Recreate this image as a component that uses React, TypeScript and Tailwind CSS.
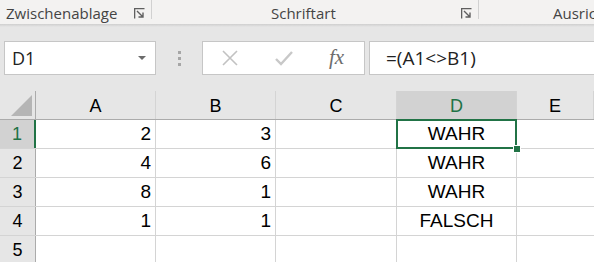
import React from 'react';

const font = { fontFamily: '"Segoe UI", "Open Sans", "Liberation Sans", sans-serif' };

const Launcher = () => (
  <svg width="11" height="11" viewBox="0 0 11 11" className="text-[#5f5f5f]">
    <path d="M0.5 10.5V0.5H10.5" fill="none" stroke="currentColor" strokeWidth="1.6" />
    <path d="M3 3L9 9M9 4.5V9H4.5" fill="none" stroke="currentColor" strokeWidth="1.4" />
  </svg>
);

const cols = ['A', 'B', 'C', 'D', 'E'];
const colW = ['w-[120px]', 'w-[120px]', 'w-[121px]', 'w-[120px]', 'w-[77px]'];

const rows: { a: string; b: string; d: string }[] = [
  { a: '2', b: '3', d: 'WAHR' },
  { a: '4', b: '6', d: 'WAHR' },
  { a: '8', b: '1', d: 'WAHR' },
  { a: '1', b: '1', d: 'FALSCH' },
  { a: '', b: '', d: '' },
];

export default function App() {
  return (
    <div className="w-[594px] h-[262px] overflow-hidden bg-white" style={font}>
      {/* Ribbon-Gruppen */}
      <div className="h-[24px] bg-[#f3f2f1] flex text-[15px] text-[#444] leading-none">
        <div className="w-[152px] shrink-0 flex items-start">
          <span className="pl-[6px] pt-[6px]">Zwischenablage</span>
          <span className="ml-auto mr-[6px] mt-[8px]"><Launcher /></span>
          <div className="w-px h-[19px] bg-[#d1d1d1]" />
        </div>
        <div className="w-[327px] shrink-0 flex items-start">
          <span className="ml-[119px] pt-[6px]">Schriftart</span>
          <span className="ml-auto mr-[6px] mt-[8px]"><Launcher /></span>
          <div className="w-px h-[19px] bg-[#d1d1d1]" />
        </div>
        <div className="flex-1 min-w-0 overflow-hidden whitespace-nowrap">
          <span className="block pl-[74px] pt-[6px]">Ausrichtung</span>
        </div>
      </div>
      <div className="h-[3px] bg-gradient-to-b from-[#cfcfcf] to-[#e6e6e6]" />

      {/* Bearbeitungsleiste */}
      <div className="h-[64px] bg-[#e6e6e6] flex items-start pt-[14px] pl-[4px]">
        <div className="w-[152px] shrink-0 h-[34px] bg-white border border-[#c6c6c6] flex items-center px-[7px]">
          <span className="text-[18px] text-[#222]">D1</span>
          <svg width="8" height="5" viewBox="0 0 8 5" className="ml-auto mr-[2px]">
            <path d="M0 0H8L4 4Z" fill="#6b6b6b" />
          </svg>
        </div>
        <div className="w-[46px] shrink-0 h-[34px] flex flex-col items-center justify-center gap-[3px]">
          <div className="w-[3px] h-[3px] bg-[#a6a6a6]" />
          <div className="w-[3px] h-[3px] bg-[#a6a6a6]" />
          <div className="w-[3px] h-[3px] bg-[#a6a6a6]" />
        </div>
        <div className="w-[163px] shrink-0 h-[34px] bg-white border border-[#c6c6c6] flex items-center">
          <svg width="16" height="16" viewBox="0 0 16 16" className="ml-[19px]">
            <path d="M1 1L15 15M15 1L1 15" stroke="#c2c2c2" strokeWidth="1.6" />
          </svg>
          <svg width="18" height="16" viewBox="0 0 18 16" className="ml-[37px]">
            <path d="M1 9L6 14L17 2" fill="none" stroke="#c8c8c8" strokeWidth="2.4" />
          </svg>
          <span
            className="ml-[36px] text-[21px] italic text-[#6d6d6d]"
            style={{ fontFamily: '"Liberation Serif", "DejaVu Serif", serif' }}
          >
            fx
          </span>
        </div>
        <div className="flex-1 min-w-0 ml-[4px] h-[34px] bg-white border border-r-0 border-[#c6c6c6] flex items-center pl-[16px]">
          <span className="text-[19px] text-[#222]">=(A1&lt;&gt;B1)</span>
        </div>
      </div>

      {/* Tabelle */}
      <div className="text-[19px] text-black" style={{ fontFamily: '"Liberation Sans", Arial, sans-serif' }}>
        <div className="flex h-[29px] bg-[#e6e6e6] border-b border-[#ababab] text-[18px]">
          <div className="w-[36px] shrink-0 border-r border-[#ababab] flex items-end justify-end pr-[3px] pb-[3px]">
            <svg width="21" height="21" viewBox="0 0 21 21">
              <path d="M21 0V21H0Z" fill="#b5b5b5" />
            </svg>
          </div>
          {cols.map((c, i) => (
            <div
              key={c}
              className={`${colW[i]} shrink-0 flex items-center justify-center border-r border-[#d4d4d4] pt-[2px] ${
                c === 'D' ? 'bg-[#d2d2d2] text-[#217346]' : ''
              }`}
            >
              {c}
            </div>
          ))}
        </div>
        {rows.map((r, i) => (
          <div key={i} className="flex h-[29px] border-b border-[#d4d4d4]">
            <div
              className={`w-[36px] shrink-0 flex items-center justify-center text-[18px] border-r ${
                i === 0 ? 'bg-[#d2d2d2] text-[#217346] border-r-2 border-r-[#217346]' : 'bg-[#e6e6e6] border-[#ababab]'
              }`}
            >
              {i + 1}
            </div>
            <div className="w-[120px] shrink-0 flex items-center justify-end pr-[4px] border-r border-[#d4d4d4]">{r.a}</div>
            <div className="w-[120px] shrink-0 flex items-center justify-end pr-[4px] border-r border-[#d4d4d4]">{r.b}</div>
            <div className="w-[121px] shrink-0 border-r border-[#d4d4d4]" />
            <div className="w-[120px] shrink-0 relative flex items-center justify-center border-r border-[#d4d4d4]">
              {r.d}
              {i === 0 && (
                <>
                  <div className="absolute -left-px -top-px -right-px -bottom-px border-2 border-[#217346] z-10" />
                  <div className="absolute -right-[5px] -bottom-[5px] w-[8px] h-[8px] bg-[#217346] border border-white z-20" />
                </>
              )}
            </div>
            <div className="w-[77px] shrink-0" />
          </div>
        ))}
      </div>
    </div>
  );
}
